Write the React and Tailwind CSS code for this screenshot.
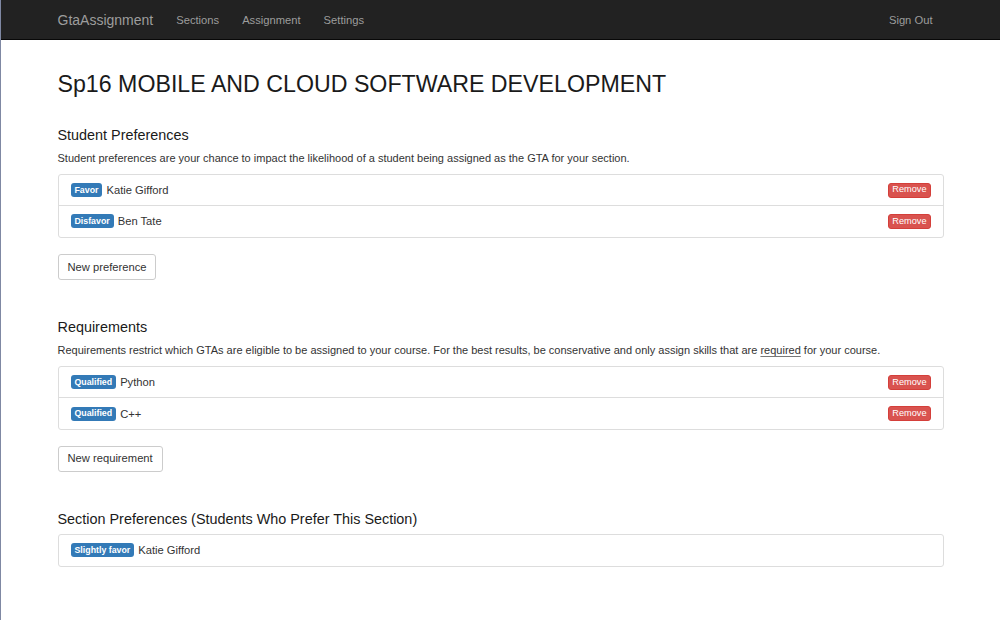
// App.jsx — GTA assignment course page
const navLinks = ['Sections', 'Assignment', 'Settings'];

const preferences = [
  { label: 'Favor', name: 'Katie Gifford' },
  { label: 'Disfavor', name: 'Ben Tate' },
];

const requirements = [
  { label: 'Qualified', name: 'Python' },
  { label: 'Qualified', name: 'C++' },
];

function Badge({ children }) {
  return (
    <span className="inline-flex items-center h-[14px] px-[4px] rounded-[3px] bg-[#337ab7] text-white text-[8.8px] font-bold leading-none">
      {children}
    </span>
  );
}

function Row({ label, name, removable }) {
  return (
    <div className="flex items-center justify-between h-[31px] px-[12px]">
      <div className="flex items-center gap-[4px] text-[11.2px] text-[#333]">
        <Badge>{label}</Badge>
        <span>{name}</span>
      </div>
      {removable && (
        <button className="h-[15px] px-[3px] rounded-[3px] bg-[#d9534f] border border-[#d43f3a] text-white text-[9.2px] leading-none">
          Remove
        </button>
      )}
    </div>
  );
}

function ListGroup({ items, removable }) {
  return (
    <div className="border border-[#ddd] rounded-[3px] divide-y divide-[#ddd]">
      {items.map((it) => (
        <Row key={it.name} {...it} removable={removable} />
      ))}
    </div>
  );
}

function NewButton({ children }) {
  return (
    <button className="h-[26px] px-[9px] border border-[#ccc] rounded-[3px] bg-white text-[11.2px] text-[#333]">
      {children}
    </button>
  );
}

export default function App() {
  return (
    <div className="min-h-[620px] bg-white border-l border-[#7f88a3]" style={{ fontFamily: '"Liberation Sans", Arial, sans-serif' }}>
      {/* Navbar */}
      <header className="h-[40px] bg-[#222] border-b border-[#080808] pt-[1px]">
        <div className="w-[886px] mx-auto h-full flex items-center justify-between">
          <nav className="flex items-center gap-[23px]">
            <span className="text-[14px] text-[#9d9d9d]">GtaAssignment</span>
            {navLinks.map((l) => (
              <a key={l} className="text-[11.2px] text-[#9d9d9d]">{l}</a>
            ))}
          </nav>
          <a className="text-[11.2px] text-[#9d9d9d] mr-[11px]">Sign Out</a>
        </div>
      </header>

      <main className="w-[886px] mx-auto text-[#333]">
        <h2 className="mt-[31px] text-[23.2px] leading-[26px] text-[#1a1a1a]">Sp16 MOBILE AND CLOUD SOFTWARE DEVELOPMENT</h2>

        {/* Student Preferences */}
        <h4 className="mt-[29px] text-[14.4px] leading-[18px] text-[#1a1a1a]">Student Preferences</h4>
        <p className="mt-[6px] text-[11px] leading-[16px]">
          Student preferences are your chance to impact the likelihood of a student being assigned as the GTA for your section.
        </p>
        <div className="mt-[8px]">
          <ListGroup items={preferences} removable />
        </div>
        <div className="mt-[16px]">
          <NewButton>New preference</NewButton>
        </div>

        {/* Requirements */}
        <h4 className="mt-[38px] text-[14.4px] leading-[18px] text-[#1a1a1a]">Requirements</h4>
        <p className="mt-[6px] text-[11px] leading-[16px]">
          Requirements restrict which GTAs are eligible to be assigned to your course. For the best results, be conservative and only assign skills that are{' '}
          <span className="underline decoration-[#777] underline-offset-2">required</span> for your course.
        </p>
        <div className="mt-[8px]">
          <ListGroup items={requirements} removable />
        </div>
        <div className="mt-[15px]">
          <NewButton>New requirement</NewButton>
        </div>

        {/* Section Preferences */}
        <h4 className="mt-[38px] text-[14.4px] leading-[18px] text-[#1a1a1a]">Section Preferences (Students Who Prefer This Section)</h4>
        <div className="mt-[6px]">
          <ListGroup items={[{ label: 'Slightly favor', name: 'Katie Gifford' }]} />
        </div>
      </main>
    </div>
  );
}
